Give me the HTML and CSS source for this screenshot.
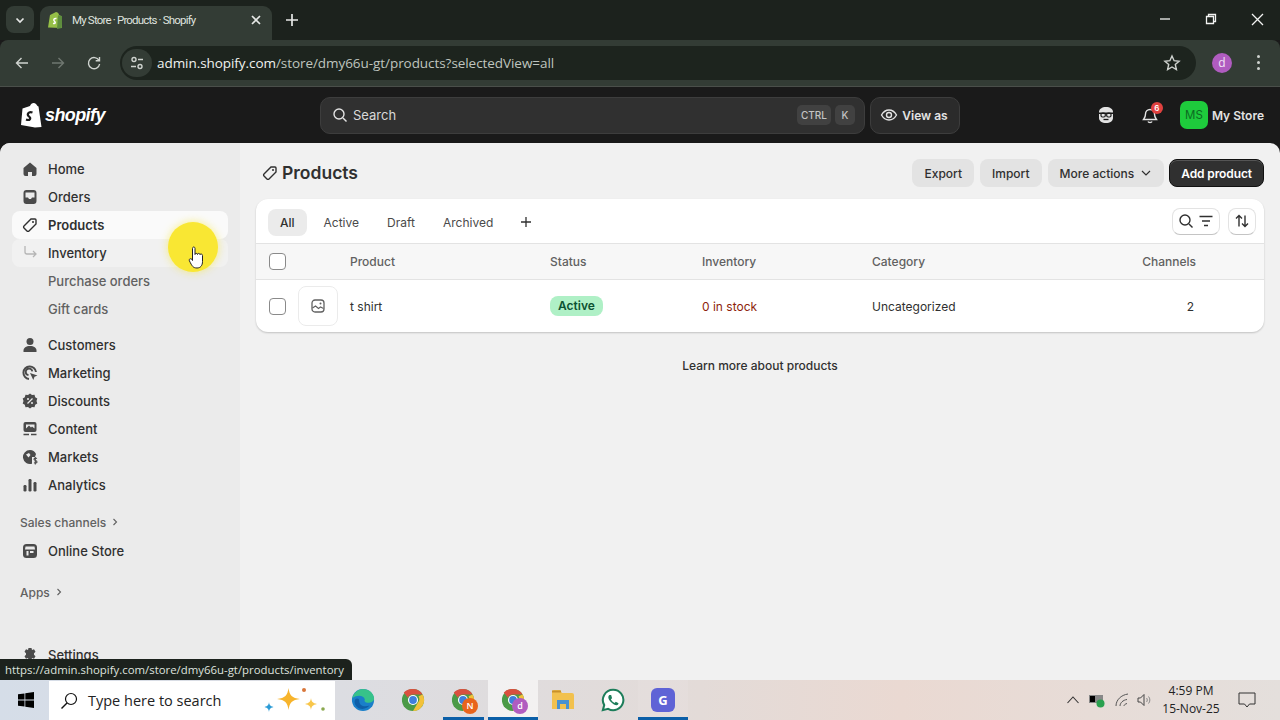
FILE: index.html
```html
<!DOCTYPE html>
<html lang="en">
<head>
<meta charset="utf-8">
<title>My Store · Products · Shopify</title>
<link rel="stylesheet" href="styles.css">
</head>
<body>
<div class="tabstrip">
  <div class="tabmenu"><svg width="12" height="12" viewBox="0 0 12 12"><path d="M2.500 4.500 6 8l3.500-3.500" class="st-w2"/></svg></div>
  <div class="tab">
    <svg class="favicon" width="16" height="18" viewBox="0 0 16 18"><path d="M3 4 9 1c1 0 3 1 3 3l2 1 1 12-14-.6z" fill="#95bf47"/><path d="M11 4.300 15 5l-.2 12-4.800 1z" fill="#5e8e3e"/><path d="M9.500 7.500C7 7 6 9 7.500 10.300c1.300 1 1 2.700-1.500 2" class="st-wf"/></svg>
    <span class="tabtitle">My Store · Products · Shopify</span>
    <svg class="tabclose" width="12" height="12" viewBox="0 0 12 12"><path d="m2 2 8 8M10 2l-8 8" class="st-w2"/></svg>
  </div>
  <svg class="newtab" width="14" height="14" viewBox="0 0 14 14"><path d="M7 1v12M1 7h12" class="st-w2"/></svg>
  <div class="spacer"></div>
  <div class="winctrls">
    <svg width="12" height="12" viewBox="0 0 12 12"><path d="M1 6h10" class="st-w1"/></svg>
    <svg width="12" height="12" viewBox="0 0 12 12"><path d="M1.500 3.500h7v7h-7zM3.500 3.500v-2h7v7h-2" class="st-w1"/></svg>
    <svg width="13" height="13" viewBox="0 0 13 13"><path d="m1 1 11 11M12 1 1 12" class="st-w1"/></svg>
  </div>
</div>

<div class="toolbar">
  <svg class="navicon first" width="16" height="16" viewBox="0 0 16 16"><path d="M14 8H2.500M7.500 3l-5 5 5 5" class="st-l"/></svg>
  <svg class="navicon dim" width="16" height="16" viewBox="0 0 16 16"><path d="M2 8h11.500M8.500 3l5 5-5 5" class="st-d"/></svg>
  <svg class="navicon" width="16" height="16" viewBox="0 0 16 16"><path d="M13 5.500A5.600 5.600 0 1 0 13.600 9M13.500 2v3.800H9.700" class="st-l"/></svg>
  <div class="omnibox">
    <div class="sitebtn"><svg width="16" height="16" viewBox="0 0 16 16"><circle cx="5" cy="4.500" r="2" class="st-l"/><path d="M9 4.500h5M2 11.500h5" class="st-l"/><circle cx="11" cy="11.500" r="2" class="st-l"/></svg></div>
    <span class="url">admin.shopify.com<span class="urldim">/store/dmy66u-gt/products?selectedView=all</span></span>
    <svg class="star" width="18" height="18" viewBox="0 0 18 18"><path d="m9 2 2.100 4.700 5 .5-3.800 3.300 1.100 5L9 13l-4.400 2.500 1.100-5L1.900 7.200l5-.5z" class="st-l"/></svg>
  </div>
  <div class="avatar">d</div>
  <div class="kebab"><i></i><i></i><i></i></div>
</div>

<header class="topbar">
  <div class="brand">
    <svg width="22" height="26" viewBox="0 0 22 26"><path d="M2.500 6.500 10 4c1-3 4-4 6-2l1.500 2 1 .5L21.500 25 15 25.500 1 23z" fill="#fff"/><path d="M12.500 10.500c-4-1.500-6 2-3.500 4 2.300 1.800 1 4.500-3 3" fill="none" stroke="#1a1a1a" stroke-width="2.200"/></svg>
    <span class="wordmark">shopify</span>
  </div>
  <div class="searchbox">
    <svg width="16" height="16" viewBox="0 0 16 16"><circle cx="7" cy="7" r="5" class="st-t"/><path d="m11 11 3.500 3.500" class="st-t"/></svg>
    <span class="searchlabel">Search</span>
    <span class="kbd">CTRL</span><span class="kbd">K</span>
  </div>
  <div class="viewas">
    <svg width="18" height="18" viewBox="0 0 18 18"><path d="M1.500 9C3.500 5.500 6 4 9 4s5.500 1.500 7.500 5c-2 3.500-4.500 5-7.500 5S3.500 12.500 1.500 9z" class="st-t"/><circle cx="9" cy="9" r="2.500" class="st-t"/></svg>
    <span>View as</span>
  </div>
  <div class="spacer"></div>
  <svg class="sidekick" width="18" height="18" viewBox="0 0 18 18"><path d="M2 6c0-3 3-5 7-5s7 2 7 5v6c0 3-3 5-7 5s-7-2-7-5z" fill="#e3e3e3"/><path d="M2 6.500h14v1.500H2z" fill="#1a1a1a"/><rect x="4" y="7" width="4.300" height="4" rx="1.500" fill="none" stroke="#1a1a1a" stroke-width="1.200"/><rect x="9.700" y="7" width="4.300" height="4" rx="1.500" fill="none" stroke="#1a1a1a" stroke-width="1.200"/><path d="M6.500 13.500h5" stroke="#1a1a1a" stroke-width="1.300"/></svg>
  <div class="bell">
    <svg width="18" height="18" viewBox="0 0 18 18"><path d="M4.500 8a4.500 4.500 0 0 1 9 0c0 3 1 4 2 5.500h-13c1-1.500 2-2.500 2-5.500zM7 15.500c.5 1.300 3.500 1.300 4 0" class="st-t"/></svg>
    <span class="badge">6</span>
  </div>
  <div class="storetile">MS</div>
  <span class="storename">My Store</span>
</header>

<div class="main">
  <nav class="sidebar">
    <a class="nav"><svg width="16" height="16" viewBox="0 0 16 16"><path d="M8 1.500 14.500 7v6a2 2 0 0 1-2 2H10v-4H6v4H3.500a2 2 0 0 1-2-2V7z" class="fi"/></svg>Home</a>
    <a class="nav"><svg width="16" height="16" viewBox="0 0 16 16"><path d="M1.500 4a3 3 0 0 1 3-3h7a3 3 0 0 1 3 3v8a3 3 0 0 1-3 3h-7a3 3 0 0 1-3-3z" class="fi"/><path d="M3.500 3.500h9v5H10l-1 1.500H7L6 8.500H3.500z" fill="#ebebeb"/></svg>Orders</a>
    <a class="nav active"><svg width="16" height="16" viewBox="0 0 16 16"><path d="M9 2h4a1 1 0 0 1 1 1v4l-7 7a1.400 1.400 0 0 1-2 0l-3-3a1.400 1.400 0 0 1 0-2z" class="ol"/><circle cx="11" cy="5" r="1" fill="#303030"/></svg>Products</a>
    <a class="nav sub hovered"><svg class="subarrow" width="16" height="16" viewBox="0 0 16 16"><path d="M3 1v6a2 2 0 0 0 2 2h9M11 6l3 3-3 3" fill="none" stroke="#b5b5b5" stroke-width="1.300"/></svg>Inventory</a>
    <a class="nav sub muted">Purchase orders</a>
    <a class="nav sub muted">Gift cards</a>
    <div class="navgap"></div>
    <a class="nav"><svg width="16" height="16" viewBox="0 0 16 16"><circle cx="8" cy="4.500" r="3.500" class="fi"/><path d="M1.500 15v-1.500C1.500 11 4 9 8 9s6.500 2 6.500 4.500V15z" class="fi"/></svg>Customers</a>
    <a class="nav"><svg width="16" height="16" viewBox="0 0 16 16"><path d="M7 14A6.300 6.300 0 1 1 14 7" fill="none" stroke="#4a4a4a" stroke-width="2"/><path d="M6.500 10.200a3.300 3.300 0 1 1 3.800-3.800" fill="none" stroke="#4a4a4a" stroke-width="1.800"/><path d="m8 8 7.500 2.500-3 1.200-1.200 3.300z" class="fi"/></svg>Marketing</a>
    <a class="nav"><svg width="16" height="16" viewBox="0 0 16 16"><path d="m8 .5 2 1.500 2.500-.2.700 2.400 2.100 1.400L14.500 8l.8 2.400-2.100 1.400-.7 2.400-2.500-.2-2 1.500-2-1.500-2.500.2-.7-2.400L.7 10.400 1.500 8 .7 5.600l2.100-1.400.7-2.400L6 2z" class="fi"/><path d="m5.500 10.500 5-5" stroke="#ebebeb" stroke-width="1.300"/><circle cx="6" cy="6" r="1" fill="#ebebeb"/><circle cx="10" cy="10" r="1" fill="#ebebeb"/></svg>Discounts</a>
    <a class="nav"><svg width="16" height="16" viewBox="0 0 16 16"><rect x="1.500" y="1" width="13" height="10" rx="2" class="fi"/><path d="M4 7.500 7 4.500l2 2 1-1 2.500 2v-4H4z" fill="#ebebeb"/><path d="M1.500 13.500h5.500M9 13.500h5.500" stroke="#4a4a4a" stroke-width="1.500"/></svg>Content</a>
    <a class="nav"><svg width="16" height="16" viewBox="0 0 16 16"><path d="M8 1a7 7 0 1 0 2 13.700V8h3l1-3A7 7 0 0 0 8 1z" class="fi"/><path d="M4 5.500 7 4l1.500 2-2 2.500z" fill="#ebebeb"/><path d="M15 9.500c-2-1-3.500 0-2.800 1.200.7 1 2.800.8 2.800 2.200 0 1.200-1.800 1.500-3 .7M13.300 8v7.500" fill="none" stroke="#4a4a4a" stroke-width="1.100"/></svg>Markets</a>
    <a class="nav"><svg width="16" height="16" viewBox="0 0 16 16"><rect x="1.500" y="8" width="3" height="6.500" rx="1.200" class="fi"/><rect x="6.500" y="2" width="3" height="12.500" rx="1.200" class="fi"/><rect x="11.500" y="5" width="3" height="9.500" rx="1.200" class="fi"/></svg>Analytics</a>
    <div class="navhead first">Sales channels <svg width="8" height="8" viewBox="0 0 8 8"><path d="m2.500 1 3 3-3 3" fill="none" stroke="#616161" stroke-width="1.100"/></svg></div>
    <a class="nav"><svg width="16" height="16" viewBox="0 0 16 16"><rect x="1" y="1" width="14" height="14" rx="3.500" class="fi"/><path d="M3.500 3.500h9l.5 3H3z" fill="#ebebeb"/><path d="M4.500 8h2v4.500h-2zM8 8h3.500v2H8z" fill="#ebebeb"/></svg>Online Store</a>
    <div class="navhead second">Apps <svg width="8" height="8" viewBox="0 0 8 8"><path d="m2.500 1 3 3-3 3" fill="none" stroke="#616161" stroke-width="1.100"/></svg></div>
    <a class="nav settings"><svg width="16" height="16" viewBox="0 0 16 16"><path d="M6.500 1h3l.5 2 2-.7 1.500 2.500-1.500 1.500v1.400l1.500 1.500-1.500 2.500-2-.7-.5 2h-3l-.5-2-2 .7L2.500 9.200 4 7.700V6.300L2.500 4.800 4 2.300l2 .7z" class="fi"/></svg>Settings</a>
  </nav>

  <main class="content">
    <div class="pagehead">
      <svg width="16" height="16" viewBox="0 0 16 16"><path d="M9 2h4a1 1 0 0 1 1 1v4l-7 7a1.400 1.400 0 0 1-2 0l-3-3a1.400 1.400 0 0 1 0-2z" class="ol"/><circle cx="11" cy="5" r="1" fill="#303030"/></svg>
      <h1>Products</h1>
      <div class="spacer"></div>
      <button class="btn">Export</button>
      <button class="btn">Import</button>
      <button class="btn">More actions <svg width="12" height="12" viewBox="0 0 12 12"><path d="m2 4 4 4 4-4" fill="none" stroke="#303030" stroke-width="1.200"/></svg></button>
      <button class="btn primary">Add product</button>
    </div>

    <section class="card">
      <div class="viewtabs">
        <span class="vt on">All</span>
        <span class="vt">Active</span>
        <span class="vt">Draft</span>
        <span class="vt">Archived</span>
        <svg class="vtplus" width="12" height="12" viewBox="0 0 12 12"><path d="M6 1v10M1 6h10" fill="none" stroke="#303030" stroke-width="1.300"/></svg>
        <div class="spacer"></div>
        <div class="toolbtn wide">
          <svg width="16" height="16" viewBox="0 0 16 16"><circle cx="7" cy="7" r="5" class="ol"/><path d="m11 11 3.500 3.500" class="ol"/></svg>
          <svg width="16" height="16" viewBox="0 0 16 16"><path d="M1.500 3.500h13M4 8h8M6 12.500h4" class="ol"/></svg>
        </div>
        <div class="toolbtn">
          <svg width="16" height="16" viewBox="0 0 16 16"><path d="M5 13.500V2.500M2 5.500l3-3 3 3M11 2.500v11M8 10.500l3 3 3-3" class="ol"/></svg>
        </div>
      </div>
      <div class="row headrow">
        <div class="cbcell"><span class="check"></span></div>
        <span>Product</span><span>Status</span><span>Inventory</span><span>Category</span><span class="chan">Channels</span>
      </div>
      <div class="row bodyrow">
        <div class="cbcell"><span class="check"></span><span class="thumb"><svg width="16" height="16" viewBox="0 0 16 16"><rect x="2" y="2" width="12" height="12" rx="3" fill="none" stroke="#616161" stroke-width="1.300"/><path d="m2.500 10 3-2 3 2.500 2-1.500 3 1.500" fill="none" stroke="#616161" stroke-width="1.200"/><circle cx="10.500" cy="5.500" r="1" fill="#616161"/></svg></span></div>
        <span class="tname">t shirt</span>
        <span><span class="pill">Active</span></span>
        <span class="stock">0 in stock</span>
        <span class="cat">Uncategorized</span>
        <span class="chanval">2</span>
      </div>
    </section>

    <p class="learn">Learn more about products</p>
  </main>
</div>

<div class="statusurl">https://admin.shopify.com/store/dmy66u-gt/products/inventory</div>

<div class="cursorspot">
  <svg width="18" height="24" viewBox="0 0 18 24"><path d="M5.500 2.500c0-2 2.500-2 2.500 0v6c0-1.500 2.500-1.500 2.500 0 0-1.500 2.500-1.500 2.500.2 0-1 2.500-1 2.500.8v6c0 4-2 6.500-5.500 6.500-4 0-5-2-7.500-7-1-2 1-3 2.500-1.500l.5 1z" fill="#fff" stroke="#222" stroke-width="1"/></svg>
</div>

<footer class="taskbar">
  <div class="startbtn"><svg width="16" height="16" viewBox="0 0 16 16"><path d="M0 2.300 6.500 1.400v6.200H0zM7.300 1.300 16 0v7.600H7.300zM0 8.400h6.500v6.200L0 13.700zM7.300 8.400H16V16l-8.700-1.300z" fill="#000"/></svg></div>
  <div class="winsearch">
    <svg width="18" height="18" viewBox="0 0 18 18"><circle cx="11" cy="7" r="5.500" fill="none" stroke="#111" stroke-width="1.200"/><path d="M7 11 1.500 16.500" stroke="#111" stroke-width="1.400"/></svg>
    <span class="wslabel">Type here to search</span>
    <svg class="sparkles" width="64" height="32" viewBox="0 0 64 32"><path d="M26.500 3c1 7.500 3.500 10 11.500 11-8 1-10.500 3.500-11.500 11-1-7.500-3.500-10-11.500-11 8-1 10.500-3.500 11.500-11z" fill="#f7b42c"/><path d="M49 13c.5 3.500 1.500 5 6 6-4.500 1-5.500 2.500-6 6-.5-3.500-1.500-5-6-6 4.500-1 5.500-2.500 6-6z" fill="#f8c64a"/><path d="M7 17c.3 2.500 1 4 4.500 5C8 23 7.300 24.500 7 27c-.3-2.500-1-4-4.500-5C6 21 6.700 19.500 7 17z" fill="#2b9bd6"/><circle cx="42" cy="5" r="2" fill="#d9763a"/><circle cx="61" cy="24" r="1.800" fill="#8aa84f"/></svg>
  </div>
  <div class="tbitem">
    <svg width="24" height="24" viewBox="0 0 26 26"><circle cx="13" cy="13" r="12" fill="#1a7fc9"/><path d="M1.500 11C3 4 9 1 13 1c6 0 11.500 4 12 10 .2 3-3 5-6.500 5-3 0-4.500-1.500-3.500-3.500C14 8 7 7 1.500 11z" fill="#37c28a"/><path d="M9 14c0 5 5 7 11 5-2 3-9 6-14 1-2-2-3-6-1-8 1-1 4-1 4 2z" fill="#0f5fa8"/></svg>
  </div>
  <div class="tbitem">
    <svg width="24" height="24" viewBox="0 0 26 26"><use href="#chromeglyph"/></svg>
  </div>
  <div class="tbitem short">
    <svg width="24" height="24" viewBox="0 0 26 26"><use href="#chromeglyph"/></svg>
    <span class="minibadge orange">N</span>
  </div>
  <div class="tbitem open current">
    <svg width="24" height="24" viewBox="0 0 26 26"><use href="#chromeglyph"/></svg>
    <span class="minibadge purple">d</span>
  </div>
  <div class="tbitem">
    <svg width="24" height="22" viewBox="0 0 24 22"><path d="M1 3a2 2 0 0 1 2-2h6l2 3h10a2 2 0 0 1 2 2v14H1z" fill="#f2c14e"/><path d="M1 1.500h9v2H1z" fill="#c9912a"/><rect x="6" y="11" width="12" height="9" fill="#4a92cf"/><rect x="9" y="15" width="6" height="5" fill="#f2c14e"/></svg>
  </div>
  <div class="tbitem">
    <svg width="24" height="24" viewBox="0 0 26 26"><path d="M13 2a11 11 0 0 0-9.500 16.500L2 24l5.700-1.500A11 11 0 1 0 13 2z" fill="#fff" stroke="#1d7d5a" stroke-width="2.200"/><path d="M9 7.500c-2 2-1 5 2 8s6 4 7.500 2.500l.5-1.500-3-1.500-1.300 1.300c-1.500-.5-3.500-2.500-4-4l1.300-1.300L11 7.500z" fill="#1d7d5a"/></svg>
  </div>
  <div class="tbitem open">
    <span class="gtile">G</span>
  </div>
  <div class="spacer"></div>
  <div class="tray">
    <svg width="14" height="10" viewBox="0 0 14 10"><path d="m1.500 8 5.500-6 5.500 6" fill="none" stroke="#333" stroke-width="1.100"/></svg>
    <svg class="battery" width="16" height="16" viewBox="0 0 16 16"><rect x="0" y="3" width="14" height="8" fill="#888"/><rect x="1" y="4" width="5" height="6" fill="#000"/><circle cx="11.500" cy="11.500" r="4" fill="#2aa14f"/></svg>
    <svg class="wifi" width="16" height="16" viewBox="0 0 16 16"><path d="M2 14C2 8 7 3 14 2M6 14c0-3 3-6 7-6.500M10 14c0-1 1-2 3-2.500" fill="none" stroke="#555" stroke-width="1"/></svg>
    <svg class="speaker" width="16" height="16" viewBox="0 0 16 16"><path d="M1 6h2.500L7 2.500v11L3.500 10H1z" fill="none" stroke="#444" stroke-width="1"/><path d="M9.500 6c1 1 1 3 0 4M11.500 4.500c1.800 2 1.800 5 0 7" fill="none" stroke="#888" stroke-width="1"/></svg>
    <div class="clock"><span>4:59 PM</span><span>15-Nov-25</span></div>
    <svg class="notif" width="18" height="16" viewBox="0 0 18 16"><path d="M1 1h16v11h-5.500L9 15l-2.500-3H1z" fill="none" stroke="#333" stroke-width="1"/></svg>
  </div>
</footer>

<svg class="defs" width="0" height="0"><defs><g id="chromeglyph"><circle cx="13" cy="13" r="12" fill="#4a9a46"/><path d="M13 1a12 12 0 0 1 10.400 6H13a6 6 0 0 0-5.500 3.500L3 5a12 12 0 0 1 10-4z" fill="#d9503f"/><path d="M23.400 7A12 12 0 0 1 13 25l5.200-9A6 6 0 0 0 19 9z" fill="#f3c13a"/><circle cx="13" cy="13" r="5.500" fill="#fff"/><circle cx="13" cy="13" r="4.200" fill="#3f7fdc"/></g></defs></svg>
</body>
</html>
```

FILE: styles.css
```css
* { box-sizing: border-box; }
html, body { margin: 0; height: 100%; }
body {
  position: relative;
  width: 1280px;
  height: 720px;
  overflow: hidden;
  display: flex;
  flex-direction: column;
  font-family: Inter, "Liberation Sans", sans-serif;
  font-size: 13px;
  color: #303030;
  background: #1a1a1a;
}
.spacer { flex: 1; }
.defs { position: absolute; }
.st-w2 { fill: none; stroke: #e6e8e6; stroke-width: 1.700; }
.st-w1 { fill: none; stroke: #f2f3f2; stroke-width: 1.300; }
.st-wf { fill: none; stroke: #fff; stroke-width: 1.500; }
.st-l { fill: none; stroke: #cfd3cf; stroke-width: 1.400; }
.st-d { fill: none; stroke: #6f7770; stroke-width: 1.400; }
.st-t { fill: none; stroke: #e3e3e3; stroke-width: 1.400; }
.fi { fill: #4a4a4a; }
.ol { fill: none; stroke: #303030; stroke-width: 1.400; }

/* browser chrome */
.tabstrip {
  height: 40px;
  flex: none;
  display: flex;
  align-items: flex-end;
  background: #1c221d;
  padding-left: 6px;
}
.tabmenu {
  width: 28px;
  height: 27px;
  margin-bottom: 7px;
  border-radius: 8px;
  background: #333c35;
  display: flex;
  align-items: center;
  justify-content: center;
}
.tab {
  width: 232px;
  height: 34px;
  margin-left: 6px;
  border-radius: 9px 9px 0 0;
  background: #333c35;
  display: flex;
  align-items: center;
  padding: 0 10px 6px 7px;
}
.tabtitle {
  flex: 1;
  margin-left: 9px;
  font: 11.500px Roboto, sans-serif;
  letter-spacing: -0.82px;
  color: #dfe2df;
  white-space: nowrap;
}
.newtab { margin: 0 0 13px 13px; }
.winctrls {
  align-self: center;
  display: flex;
  align-items: center;
  gap: 34px;
  margin: 0 16px 2px 0;
}
.toolbar {
  height: 47px;
  flex: none;
  display: flex;
  align-items: center;
  background: #333c35;
  border-radius: 8px 8px 0 0;
  border-bottom: 1px solid #4a4f4a;
  padding-bottom: 1px;
}
.navicon { margin-left: 20px; flex: none; }
.navicon.first { margin-left: 14px; }
.omnibox {
  width: 1076px;
  height: 34px;
  margin-left: 18px;
  border-radius: 17px;
  background: #1d241e;
  display: flex;
  align-items: center;
  padding: 0 15px 0 2px;
}
.sitebtn {
  width: 30px;
  height: 28px;
  border-radius: 14px;
  background: #333c35;
  display: flex;
  align-items: center;
  justify-content: center;
}
.url {
  flex: 1;
  margin-left: 5px;
  font: 13.500px "Open Sans", sans-serif;
  letter-spacing: -0.06px;
  color: #f0f2f0;
  white-space: nowrap;
}
.urldim { color: #bfc4bf; }
.avatar {
  width: 20px;
  height: 20px;
  margin-left: 16px;
  border-radius: 50%;
  background: #b05cc0;
  color: #f2e4f5;
  font: 12px/19px "Open Sans", sans-serif;
  text-align: center;
}
.kebab {
  margin-left: 25px;
  display: flex;
  flex-direction: column;
  gap: 3px;
}
.kebab i { width: 3px; height: 3px; border-radius: 50%; background: #cfd3cf; display: block; }

/* shopify topbar */
.topbar {
  height: 56px;
  flex: none;
  display: flex;
  align-items: center;
  background: #1a1a1a;
  padding: 0 16px 0 20px;
}
.brand { width: 300px; display: flex; align-items: center; gap: 3px; }
.wordmark {
  font: italic 700 18px "Liberation Sans", sans-serif;
  letter-spacing: -0.6px;
  color: #fff;
}
.searchbox {
  width: 545px;
  height: 37px;
  border: 1px solid #3d3d3d;
  border-radius: 10px;
  background: #303030;
  display: flex;
  align-items: center;
  padding: 0 9px 0 11px;
  gap: 4px;
  color: #d8d8d8;
}
.searchlabel { flex: 1; font-size: 13px; margin-left: 1px; }
.kbd {
  height: 20px;
  min-width: 20px;
  padding: 0 4px;
  border-radius: 5px;
  background: #414141;
  color: #c4c4c4;
  font-size: 10px;
  font-weight: 500;
  line-height: 20px;
  text-align: center;
}
.viewas {
  width: 90px;
  height: 37px;
  margin-left: 5px;
  border: 1px solid #3d3d3d;
  border-radius: 10px;
  background: #2b2b2b;
  display: flex;
  align-items: center;
  justify-content: center;
  gap: 4px;
  font-size: 12px;
  font-weight: 600;
  color: #e3e3e3;
  padding-right: 2px;
}
.sidekick { margin-right: 26px; }
.bell { position: relative; width: 18px; height: 18px; margin-right: 21px; }
.badge {
  position: absolute;
  top: -4px;
  right: -4px;
  width: 12px;
  height: 12px;
  border-radius: 50%;
  background: #e0413f;
  color: #fff;
  font-size: 8px;
  font-weight: 600;
  line-height: 12px;
  text-align: center;
}
.storetile {
  width: 28px;
  height: 28px;
  border-radius: 7px;
  background: #1ecb3c;
  color: #0c6a22;
  font-size: 11.500px;
  line-height: 28px;
  text-align: center;
}
.storename { margin-left: 4px; font-size: 12px; font-weight: 600; color: #e3e3e3; white-space: nowrap; }

/* main area */
.main {
  flex: 1;
  min-height: 0;
  display: flex;
  border-radius: 10px 10px 0 0;
  overflow: hidden;
  background: #f1f1f1;
}
.sidebar {
  width: 240px;
  flex: none;
  background: #ebebeb;
  padding: 12px 12px 0;
  display: flex;
  flex-direction: column;
  overflow: hidden;
}
.nav {
  height: 28px;
  flex: none;
  display: flex;
  align-items: center;
  gap: 10px;
  padding-left: 10px;
  border-radius: 8px;
  font-weight: 500;
  color: #303030;
  white-space: nowrap;
}
.nav.active { background: #fafafa; font-weight: 600; }
.nav.sub { padding-left: 36px; }
.nav.hovered { background: #f1f1f1; padding-left: 10px; }
.nav.muted { color: #616161; }
.subarrow { flex: none; }
.navgap { height: 8px; flex: none; }
.navhead {
  height: 28px;
  flex: none;
  display: flex;
  align-items: center;
  gap: 5px;
  padding-left: 8px;
  font-size: 12px;
  font-weight: 500;
  color: #616161;
}
.navhead.first { margin: 9px 0 1px; }
.navhead.second { margin: 13px 0 1px; }
.nav.settings { margin-top: 34px; }

.content { flex: 1; min-width: 0; padding: 16px 16px 0; }
.pagehead {
  height: 28px;
  display: flex;
  align-items: center;
  gap: 6px;
  padding-left: 6px;
}
.pagehead h1 { margin: 0 0 1px -2px; font-size: 17.500px; font-weight: 600; color: #303030; }
.btn {
  height: 28px;
  padding: 0 12px;
  border: 0;
  border-radius: 8px;
  background: #e3e3e3;
  color: #303030;
  font: 500 12px Inter, sans-serif;
  display: flex;
  align-items: center;
  gap: 6px;
  white-space: nowrap;
}
.btn.primary {
  margin-left: -1px;
  padding: 0 11px;
  background: #303030;
  color: #fff;
  font-weight: 600;
  letter-spacing: -0.1px;
  border: 1px solid #111;
  box-shadow: inset 0 1px 0 #555;
}
.card {
  margin-top: 12px;
  height: 133px;
  border-radius: 12px;
  background: #fff;
  box-shadow: 0 1px 2px rgba(0, 0, 0, .2);
  overflow: hidden;
  font-size: 12px;
}
.viewtabs {
  height: 44px;
  display: flex;
  align-items: center;
  padding: 2px 8px 0 12px;
}
.vt {
  height: 27px;
  padding: 0 14px;
  border-radius: 8px;
  line-height: 27px;
  font-weight: 400;
  color: #4a4a4a;
}
.vt.on { background: #ebebeb; color: #303030; padding: 0 12px; font-weight: 500; margin-right: 3px; }
.vtplus { margin-left: 13px; }
.toolbtn {
  width: 28px;
  height: 27px;
  margin: -2px 0 0 8px;
  border-radius: 8px;
  background: #fff;
  border: 1px solid #e3e3e3;
  border-bottom-color: #c4c4c4;
  display: flex;
  align-items: center;
  justify-content: center;
}
.toolbtn.wide { width: 48px; gap: 4px; }
.row {
  display: grid;
  grid-template-columns: 94px 200px 152px 170px 1fr 140px;
  align-items: center;
  border-top: 1px solid #e3e3e3;
}
.headrow { height: 36px; background: #f7f7f7; color: #616161; font-weight: 500; }
.bodyrow { height: 53px; }
.cbcell { display: flex; align-items: center; padding-left: 13px; }
.check {
  width: 17px;
  height: 17px;
  border: 1px solid #8a8a8a;
  border-radius: 4px;
  background: #fff;
  flex: none;
}
.thumb {
  width: 40px;
  height: 40px;
  margin-left: 12px;
  border: 1px solid #ebebeb;
  border-radius: 8px;
  display: flex;
  align-items: center;
  justify-content: center;
  flex: none;
}
.tname, .cat, .chanval { font-weight: 400; }
.pill {
  display: inline-block;
  height: 20px;
  padding: 0 8px;
  border-radius: 8px;
  background: #aff0c6;
  color: #0c5132;
  font-weight: 600;
  line-height: 20px;
}
.stock { color: #8e1f0b; }
.chan { text-align: right; padding-right: 68px; }
.chanval { text-align: right; padding-right: 70px; }
.learn { margin: 26px 0 0; text-align: center; font-weight: 500; font-size: 12px; }

/* overlays */
.statusurl {
  position: absolute;
  left: 0;
  top: 659px;
  width: 352px;
  height: 21px;
  border-radius: 0 6px 0 0;
  background: #1c221d;
  color: #dfe2df;
  padding-left: 5px;
  font: 11.400px/21px "Open Sans", sans-serif;
  white-space: nowrap;
}
.cursorspot {
  position: absolute;
  left: 168px;
  top: 222px;
  width: 50px;
  height: 50px;
  border-radius: 50%;
  background: #f9e733;
  box-shadow: 0 0 8px rgba(249, 231, 51, .6);
  padding: 24px 0 0 19px;
}
.cursorspot svg { display: block; }

/* windows taskbar */
.taskbar {
  height: 40px;
  flex: none;
  display: flex;
  align-items: stretch;
  background: linear-gradient(90deg, #d5dde8 0, #dcdde2 340px, #e3dbd8 700px, #ead9d2 900px, #e4dfdc 1280px);
}
.startbtn { width: 49px; display: flex; align-items: center; justify-content: center; padding-left: 2px; }
.winsearch {
  width: 286px;
  margin: 1px 3px 0 0;
  background: #fff;
  display: flex;
  align-items: center;
  padding-left: 11px;
  flex: none;
}
.wslabel {
  flex: 1;
  margin-left: 10px;
  font: 14.500px "Open Sans", sans-serif;
  color: #222;
  white-space: nowrap;
}
.sparkles { margin-right: 9px; }
.tbitem {
  position: relative;
  width: 50px;
  display: flex;
  align-items: center;
  justify-content: center;
  flex: none;
  border-bottom: 3px solid transparent;
  padding-top: 3px;
}
.tbitem.open { border-bottom-color: #0b5fa8; background: rgba(255, 255, 255, .08); }
.tbitem.current { background: rgba(255, 255, 255, .6); }
.tbitem.short::after {
  content: "";
  position: absolute;
  left: 5px;
  right: 4px;
  bottom: -3px;
  height: 3px;
  background: #0b5fa8;
}
.minibadge {
  position: absolute;
  left: 24px;
  top: 18px;
  width: 16px;
  height: 16px;
  border-radius: 50%;
  color: #fff;
  font: 600 9px/16px "Open Sans", sans-serif;
  text-align: center;
}
.minibadge.orange { background: #e8641c; }
.minibadge.purple { background: #b05cc0; }
.gtile {
  width: 24px;
  height: 24px;
  border-radius: 6px;
  background: #5f63d6;
  color: #fff;
  font: 700 13px/24px "Open Sans", sans-serif;
  text-align: center;
}
.tray { display: flex; align-items: center; padding-right: 24px; }
.battery { margin-left: 9px; }
.wifi { margin-left: 9px; }
.speaker { margin-left: 7px; }
.clock {
  width: 64px;
  margin-left: 6px;
  display: flex;
  flex-direction: column;
  align-items: center;
  font: 12px/18px "Open Sans", sans-serif;
  color: #222;
}
.notif { margin-left: 15px; }
```
